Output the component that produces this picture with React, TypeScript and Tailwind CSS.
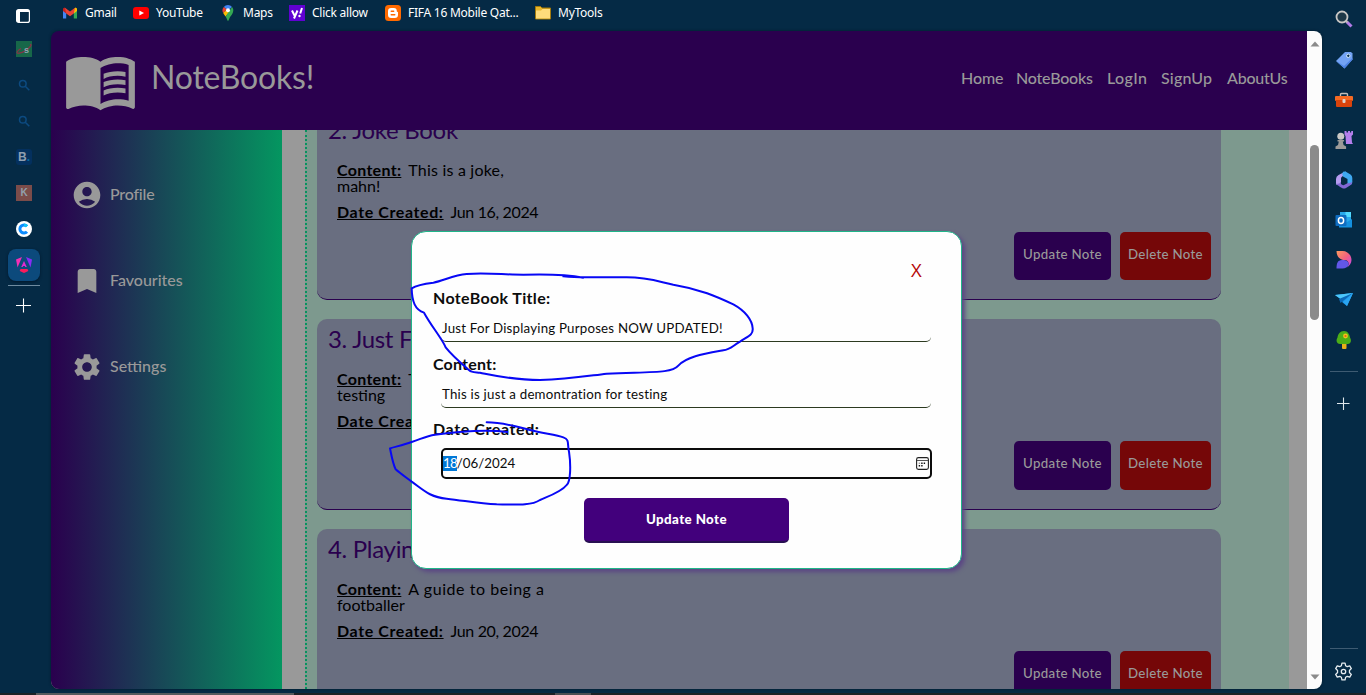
import React from "react";
import { MdAccountCircle, MdBookmark, MdMenuBook, MdSettings } from "react-icons/md";

type Note = { title: string; lines: string[]; date: string; spacing: string };

const notes: Note[] = [
  { title: "2. Joke Book", lines: ["This is a joke,", "mahn!"], date: "Jun 16, 2024", spacing: "tracking-[0.2px]" },
  { title: "3. Just For Displaying Purposes", lines: ["This is just a", "testing"], date: "Jun 18, 2024", spacing: "tracking-[0.2px]" },
  { title: "4. Playing Football", lines: ["A guide to being a", "footballer"], date: "Jun 20, 2024", spacing: "tracking-[0.55px]" },
];

function Bookmark({ icon, label, box }: { icon: React.ReactNode; label: string; box: string }) {
  return (
    <div className={`flex h-[26px] shrink-0 items-center ${box}`}>
      <span className="mr-[7px] flex h-4 w-4 shrink-0">{icon}</span>
      <span className="whitespace-nowrap">{label}</span>
    </div>
  );
}

function BookmarksBar() {
  return (
    <div className="flex h-[31px] shrink-0 items-start pl-[11px] font-['Noto_Sans','Open_Sans',sans-serif] text-[12px] tracking-[-0.25px] text-white">
      <Bookmark
        box="w-[71px]"
        label="Gmail"
        icon={
          <svg viewBox="0 0 16 16" className="h-4 w-4">
            <path d="M1 4v9.500h3.200V6z" fill="#4285f4" />
            <path d="M11.800 6v7.500H15V4z" fill="#34a853" />
            <path d="M1 3.500 2.500 2.500 4.200 4v4.500L1 6z" fill="#c5221f" />
            <path d="M11.800 4l1.700-1.500 1.500 1V6l-3.200 2.500z" fill="#fbbc04" />
            <path d="M3 2.800 8 6.500l5-3.700-1.200 5.700L8 11.300 4.200 8.500z" fill="#ea4335" />
          </svg>
        }
      />
      <Bookmark
        box="w-[87px]"
        label="YouTube"
        icon={
          <svg viewBox="0 0 16 16" className="h-4 w-4">
            <rect y="2" width="16" height="12" rx="3" fill="#f00" />
            <path d="M6.300 5.500v5L11 8z" fill="#fff" />
          </svg>
        }
      />
      <Bookmark
        box="w-[69px]"
        label="Maps"
        icon={
          <svg viewBox="0 0 16 16" className="h-4 w-4">
            <path d="M8 0a5.300 5.300 0 0 0-4.200 2L8 5.500 12 2A5.300 5.300 0 0 0 8 0z" fill="#4285f4" />
            <path d="M3.800 2a5.200 5.200 0 0 0-.6 6L7 4.500z" fill="#ea4335" />
            <path d="M3.200 8c.6 1.300 1.500 2.300 2.400 3.600L10 6 7 4.500z" fill="#fbbc04" />
            <path d="M12 2 5.600 11.600C7 13.500 7.300 16 8 16s1-2.500 2.400-4.400S13.300 8 13.300 5.300c0-1.300-.5-2.500-1.300-3.300z" fill="#34a853" />
            <circle cx="8" cy="5.300" r="2" fill="#fff" />
          </svg>
        }
      />
      <Bookmark
        box="w-[96px]"
        label="Click allow"
        icon={
          <svg viewBox="0 0 16 16" className="h-4 w-4">
            <rect width="16" height="16" fill="#6001d2" />
            <path d="M3 5.500l2.500 5M8.500 5.500 5 13.500M13 3l-1.800 5.500" stroke="#fff" strokeWidth="2" fill="none" />
            <circle cx="10.500" cy="11" r="1.200" fill="#fff" />
          </svg>
        }
      />
      <Bookmark
        box="w-[150px]"
        label="FIFA 16 Mobile Qat..."
        icon={
          <svg viewBox="0 0 16 16" className="h-4 w-4">
            <rect width="16" height="16" rx="3.500" fill="#ff6a00" />
            <path d="M6.200 3h2.600a3 3 0 0 1 3 3v.6l1.200.6v2.600A3.200 3.200 0 0 1 9.800 13H6.200A3.200 3.200 0 0 1 3 9.800V6.200A3.200 3.200 0 0 1 6.200 3z" fill="#fff" />
            <path d="M6.200 6.300h2.500M6.200 9.700h3.600" stroke="#ff6a00" strokeWidth="1.400" strokeLinecap="round" />
          </svg>
        }
      />
      <Bookmark
        box="w-[80px]"
        label="MyTools"
        icon={
          <svg viewBox="0 0 16 16" className="h-4 w-4">
            <path d="M.5 1.500h5l1.500 1.500h8.500v11H.5z" fill="#e8b62c" stroke="#a37a0c" />
            <path d="M1 5.500h5L7.500 4H15v9.500H1z" fill="#ffdc7c" />
          </svg>
        }
      />
    </div>
  );
}

function SearchGlyph() {
  return (
    <svg viewBox="0 0 16 16" className="h-4 w-4" fill="none" stroke="#0c4a80" strokeWidth="1.500">
      <circle cx="6.800" cy="6.800" r="3.300" />
      <path d="M9.300 9.300l4 4" />
    </svg>
  );
}

function Cell({ children }: { children: React.ReactNode }) {
  return <div className="flex h-9 w-8 shrink-0 items-center justify-center">{children}</div>;
}

function TabRail() {
  return (
    <div className="flex w-[51px] shrink-0 flex-col items-start pl-2">
      <div className="flex h-[31px] w-8 items-center justify-center">
        <svg viewBox="0 0 14 14" className="mr-[2px] h-[14px] w-[14px]" fill="none" stroke="#fff">
          <rect x=".6" y=".6" width="12.800" height="12.800" rx="2" strokeWidth="1.200" />
          <path d="M1 2h12" strokeWidth="2" />
          <path d="M2.500 2v11" strokeWidth="3" />
        </svg>
      </div>
      <Cell>
        <div className="flex h-4 w-4 items-center justify-center bg-[#176749]">
          <svg viewBox="0 0 16 16" className="h-4 w-4">
            <path d="M5 7.500C1 10 0 12 2 12.300c2 0 7-2 10-4.500s4-4.500 2-4.500" fill="none" stroke="#843447" strokeWidth="1.300" />
            <text x="8" y="11.500" fontSize="9" fontWeight="700" fill="#8ba7b3" fontFamily="Liberation Sans, sans-serif">s</text>
          </svg>
        </div>
      </Cell>
      <Cell><SearchGlyph /></Cell>
      <Cell><SearchGlyph /></Cell>
      <Cell>
        <div className="flex h-4 w-4 items-center justify-center rounded-[3px] bg-[#04305e] font-['Liberation_Sans',sans-serif] text-[12px] font-bold leading-none text-[#8f9fb0]">
          B<span className="text-[#086b9e]">.</span>
        </div>
      </Cell>
      <Cell>
        <div className="flex h-4 w-4 items-center justify-center bg-[#7b4c4a] font-['Liberation_Sans',sans-serif] text-[10px] font-bold leading-none text-[#91a0ad]">
          K
        </div>
      </Cell>
      <Cell>
        <svg viewBox="0 0 16 16" className="h-4 w-4">
          <circle cx="8" cy="8" r="8" fill="#fff" />
          <path d="M11 5.200A4.100 4.100 0 1 0 11 10.800" fill="none" stroke="#0b8bff" strokeWidth="3" />
          <path d="M8 3.900a4.100 4.100 0 0 1 3 1.300" fill="none" stroke="#12c4f5" strokeWidth="3" />
        </svg>
      </Cell>
      <div className="flex h-9 items-center">
        <div className="flex h-8 w-8 items-center justify-center rounded-[8px] bg-[#0c4a7c] shadow-[0_1px_3px_#02182c]">
          <svg viewBox="0 0 16 16" className="h-4 w-4">
            <path d="M0 2.500 6 0 1.500 10.500z" fill="#f52fb5" />
            <path d="M16 2.500 10 0l4.500 10.500z" fill="#8b2cf5" />
            <path d="M8 4l2.800 6H9.300L8.800 9H7.200l-.5 1H5.200z" fill="#e02bd0" />
            <path d="M4.500 12h7l.8 2L8 16l-4.300-2z" fill="#fa1b5c" />
          </svg>
        </div>
      </div>
      <div className="mt-[2px] h-px w-8 bg-[#6f8ba0]" />
      <svg viewBox="0 0 16 16" className="ml-[7px] mt-3 h-4 w-4" stroke="#fff" strokeWidth="1.100">
        <path d="M8.500 .5v14M1 7.500h15" />
      </svg>
    </div>
  );
}

function ToolCell({ children }: { children: React.ReactNode }) {
  return <div className="flex h-10 w-full shrink-0 items-center justify-center">{children}</div>;
}

function ToolRail() {
  return (
    <div className="-mt-[0.5px] flex w-[44px] shrink-0 flex-col items-center">
      <ToolCell>
        <svg viewBox="0 0 18 18" className="mb-[2px] h-[18px] w-[18px]" fill="none">
          <path d="M11.500 11.500l5 5" stroke="#b27be8" strokeWidth="3" />
          <path d="M10.500 10.500l2 2" stroke="#b9b7b5" strokeWidth="2" />
          <circle cx="7" cy="7" r="5.500" stroke="#c9c7c5" strokeWidth="1.800" fill="#1e3848" />
        </svg>
      </ToolCell>
      <ToolCell>
        <svg viewBox="0 0 18 18" className="h-[18px] w-[18px]">
          <path d="M10 1h6l1.500 1.500v6L9.500 17.500 1 10z" fill="#73a3f4" />
          <path d="M1 10l8.500 7.500 8-9V7L9 15z" fill="#4c82e4" />
          <circle cx="13.300" cy="4.800" r="1.700" fill="#0b3350" stroke="#d8ecff" />
        </svg>
      </ToolCell>
      <ToolCell>
        <svg viewBox="0 0 18 18" className="h-[18px] w-[18px]">
          <path d="M5.500 5V3.500q0-1 1-1h5q1 0 1 1V5" fill="none" stroke="#c2beb9" strokeWidth="1.400" />
          <rect y="5" width="18" height="5" rx="1" fill="#f56a23" />
          <path d="M1 9h16v6q0 1-1 1H2q-1 0-1-1z" fill="#d9430c" />
          <rect x="7.500" y="8" width="3" height="4" rx="1" fill="#dcd5cf" />
        </svg>
      </ToolCell>
      <ToolCell>
        <svg viewBox="0 0 18 18" className="h-[18px] w-[18px]">
          <path d="M9.500 0h2v1.500H13V0h2v1.500h1.200V0H18v3.500L16.500 5l.5 6.500 1 1.500h-7L10.500 5 9.500 3.500z" fill="#b57fec" />
          <circle cx="5.800" cy="5.200" r="3.500" fill="#c9c8c5" />
          <path d="M2.500 9h6.600v1.500H7.800l.8 3.500 2.500 1.500V18H.5v-2.500L3 14l.8-3.500H2.500z" fill="#9c9a98" />
        </svg>
      </ToolCell>
      <ToolCell>
        <svg viewBox="0 0 18 18" className="h-[18px] w-[18px]">
          <path d="M10.500.5 3.500 4Q1 5.500 1 8v4.500Q1 14 2.500 14c2 0 3.500-1 3.500-3V7.500q0-1.500 1.500-2.300L11 3.500z" fill="#b59cf0" />
          <path d="M8 .8 10.500.5 15.500 3.500Q17.300 4.800 17.300 7v4c0 2-1 3-2.800 3L12.500 13V8L8 5.500Q6.500 3 8 .8z" fill="#3fa8f0" />
          <path d="M1.500 12.500C2 14 3 14.500 7 17q2 1 4 0l4-2.500q2.300-1.500 2.300-4-2 2.500-4.300 1.500L9 14q-1.500.5-3-1V11q-1.500 2.500-4.500 1.500z" fill="#8267d5" />
        </svg>
      </ToolCell>
      <ToolCell>
        <svg viewBox="0 0 18 18" className="h-[18px] w-[18px]">
          <rect x="5" y="1" width="11" height="11" fill="#28a8ea" />
          <rect x="10.500" y="1" width="5.500" height="5" fill="#50d9ff" />
          <path d="M4 8l6.500 4L17 8v8.500H4z" fill="#1490df" />
          <rect x=".5" y="4" width="11" height="11" rx="1" fill="#0f6cc0" />
          <ellipse cx="6" cy="9.500" rx="2.600" ry="3" fill="none" stroke="#fff" strokeWidth="1.500" />
        </svg>
      </ToolCell>
      <ToolCell>
        <svg viewBox="0 0 18 18" className="h-[18px] w-[18px]">
          <defs>
            <linearGradient id="petal" x1="0" y1="0" x2="1" y2="1">
              <stop offset="0" stopColor="#fb9a5e" />
              <stop offset=".5" stopColor="#f2617f" />
              <stop offset="1" stopColor="#c443f0" />
            </linearGradient>
          </defs>
          <path d="M1.500 0h6c5 0 9 4 9 9 0 3-2 6-4.500 7.500 3-3.500 1.500-7.500-2.500-7.500-5 0-8-4-8-9z" fill="url(#petal)" />
          <path d="M1.500 17.500c0-5 1-8.500 5.500-8.500 5 0 7 1.500 6.500 5-1 2-3 3.500-6 3.500z" fill="#6257e8" />
        </svg>
      </ToolCell>
      <ToolCell>
        <svg viewBox="0 0 18 18" className="mb-[1px] h-[18px] w-[18px]">
          <path d="M0 5l18-2-6 13-4.500-3.500L7 10z" fill="#1d9bec" />
          <path d="M0 5l18-2L7 10z" fill="#4cc7fb" />
          <path d="M18 3 5.500 13 4 9z" fill="#0c69b8" />
          <path d="M18 3l-9.500 9L12 16z" fill="#2ba5f2" />
        </svg>
      </ToolCell>
      <ToolCell>
        <svg viewBox="0 0 18 18" className="h-[18px] w-[18px]">
          <rect x="7" y="12" width="4.500" height="6" rx="1" fill="#e8ae18" />
          <path d="M9 0c4 0 5.500 3.500 6 6.500 2 3 .5 6.500-2 6.500H5c-3 0-4.500-3.500-2.500-6.500C3 3 5 0 9 0z" fill="#4cae17" />
          <circle cx="10.500" cy="5" r="2.400" fill="#f0c419" />
          <circle cx="10.500" cy="5" r="1.100" fill="#e7601a" />
        </svg>
      </ToolCell>
      <div className="mt-[11px] h-px w-7 bg-[#3e5b72]" />
      <svg viewBox="0 0 14 14" className="mr-[2px] mt-[25px] h-[14px] w-[14px]" stroke="#dfe7ec" strokeWidth="1.100">
        <path d="M7.500 .5v12.500M1 6.500h12.500" />
      </svg>
      <div className="mt-[237px] h-px w-7 bg-[#3e5b72]" />
      <svg viewBox="0 0 24 24" className="mr-[1px] mt-[13px] h-[19px] w-[19px]" fill="none" stroke="#e7edf1" strokeWidth="1.600" strokeLinejoin="round">
        <path d="M9.300 4.800 10 1.500h4l.7 3.300 2 1.100 3.200-1 2 3.400-2.400 2.400v2.600l2.400 2.400-2 3.400-3.200-1-2 1.100-.7 3.300h-4l-.7-3.300-2-1.100-3.200 1-2-3.400 2.400-2.400v-2.600L2.100 8.300l2-3.400 3.200 1z" />
        <circle cx="12" cy="12" r="2.800" />
      </svg>
    </div>
  );
}

function SiteHeader() {
  return (
    <div className="flex h-[99px] shrink-0 bg-[#2a004e] text-[#999]">
      <MdMenuBook className="ml-3 mt-[12px] h-[75px] w-[75px] shrink-0" />
      <div className="ml-[13px] mt-[24px] w-[300px] whitespace-nowrap text-[32px] leading-[44px] tracking-[-0.2px]">NoteBooks!</div>
      <div className="ml-auto flex pt-[37px] text-[16px] font-medium leading-[20px]">
        <span className="w-[55px] tracking-[-0.1px]">Home</span>
        <span className="w-[91px] tracking-[-0.2px]">NoteBooks</span>
        <span className="w-[54px] tracking-[0.4px]">LogIn</span>
        <span className="w-[66px] tracking-[0.2px]">SignUp</span>
        <span className="w-[80px] tracking-[-0.2px]">AboutUs</span>
      </div>
    </div>
  );
}

function SideMenu() {
  return (
    <div className="flex w-[231px] shrink-0 flex-col bg-linear-to-r/srgb from-[#2a004e] to-[#049660] pl-5 pt-[49px] text-[16px] font-medium text-[#999]">
      <div className="flex h-[86px] items-start leading-[30px]">
        <MdAccountCircle className="h-8 w-8" />
        <span className="ml-[7px] tracking-[-0.2px]">Profile</span>
      </div>
      <div className="flex h-[86px] items-start leading-[30px]">
        <MdBookmark className="h-8 w-8" />
        <span className="ml-[7px]">Favourites</span>
      </div>
      <div className="flex h-[86px] items-start leading-[30px]">
        <MdSettings className="h-8 w-8" />
        <span className="ml-[7px]">Settings</span>
      </div>
    </div>
  );
}

function NoteCard({ note }: { note: Note }) {
  return (
    <div className="mb-[19px] flex h-[190.6px] w-[904px] shrink-0 flex-col rounded-[10px] border-b border-[#2a004e] bg-[#696e80] pt-[8px]">
      <h2 className="ml-[11px] text-[24px] leading-[24px] tracking-[-0.3px] text-[#2a004e]">{note.title}</h2>
      <div className="ml-5 mt-[20px] whitespace-nowrap text-[16px] leading-[16px] text-black">
        <p>
          <b className="mr-[7px] tracking-[0.3px] underline">Content:</b>
          <span className={note.spacing}>{note.lines[0]}</span>
        </p>
        <p>{note.lines[1]}</p>
        <p className="mt-[10px]">
          <b className="mr-[7px] tracking-[0.6px] underline">Date Created:</b>
          <span className="tracking-[-0.35px]">{note.date}</span>
        </p>
      </div>
      <div className="mr-[10px] mt-[12px] flex justify-end gap-[9px] text-[13.3px] font-medium tracking-[0.3px] text-[#999]">
        <button className="h-[48.6px] w-[97px] rounded-[5px] bg-[#2a004e] pb-[2px]">Update Note</button>
        <button className="h-[48.6px] w-[91px] rounded-[5px] bg-[#750708] pb-[2px]">Delete Note</button>
      </div>
    </div>
  );
}

function PageScrollbar() {
  return (
    <div className="flex w-[15px] shrink-0 flex-col items-center bg-[#fcfcfc]">
      <svg viewBox="0 0 10 6" className="mt-[9.5px] h-[6px] w-[10px]" fill="#8b8b8b">
        <path d="M5 .5 9.500 5.500H.5z" />
      </svg>
      <div className="mt-[98.5px] h-[175px] w-[9px] rounded-full bg-[#8b8b8b]" />
      <svg viewBox="0 0 10 6" className="mb-[9px] mt-auto h-[6px] w-[10px]" fill="#8b8b8b">
        <path d="M.5 .5h9L5 5.500z" />
      </svg>
    </div>
  );
}

function CalendarIcon() {
  return (
    <svg viewBox="0 0 13 13" className="h-[13px] w-[13px]">
      <rect x=".6" y=".6" width="11.800" height="11.800" rx="1.800" fill="none" stroke="#222" strokeWidth="1.100" />
      <path d="M1 3.500h11" stroke="#555" />
      <path d="M5.200 6.300h1.400M7.700 6.300h1.400M2.700 8.800h1.400M5.200 8.800h1.400" stroke="#111" strokeWidth="1.400" />
      <path d="M2.700 6.300h1.400" stroke="#999" strokeWidth="1.400" />
    </svg>
  );
}

function UpdateDialog() {
  return (
    <div className="absolute left-[411px] top-[231px] flex h-[338px] w-[551px] flex-col rounded-[15px] border border-[#1fb589] bg-[#fefefe] px-[21px] text-[#0c0c0c] shadow-[3px_3px_4px_#5b4784]">
      <div className="mr-[16px] mt-[25px] self-end text-[20px] leading-[26px] text-[#b50606]">
        <span className="block w-[13px] font-['Open_Sans',sans-serif] text-[18.5px] font-medium">X</span>
      </div>
      <div className="mt-[5px] text-[16px] font-bold leading-[20px] tracking-[0.35px]">NoteBook Title:</div>
      <div className="ml-2 mt-[9px] h-[25px] w-[490px] rounded-[5px] border-b border-[#2c3a20] pl-[1px] text-[13.3px] leading-[22px] tracking-[0.2px]">
        Just For Displaying Purposes NOW UPDATED!
      </div>
      <div className="mt-[12px] text-[16px] font-bold leading-[20px] tracking-[0.2px]">Content:</div>
      <div className="ml-2 mt-[9px] h-[25px] w-[490px] rounded-[5px] border-b border-[#2c3a20] pl-[1px] text-[13.3px] leading-[22px] tracking-[0.22px]">
        This is just a demontration for testing
      </div>
      <div className="mt-[11px] text-[16px] font-bold leading-[20px] tracking-[0.6px]">Date Created:</div>
      <div className="ml-2 mt-[9px] flex h-[31px] w-[491px] items-center rounded-[5px] border-2 border-[#0c0c0c] pr-[1px] text-[13.3px] leading-[15px]">
        <span className="bg-[#0078d7] tracking-[-0.8px] text-white">18</span>
        <span>/06/2024</span>
        <span className="ml-auto"><CalendarIcon /></span>
      </div>
      <button className="ml-[151px] mt-[19px] h-[45px] w-[205px] rounded-[5px] border-b-2 border-[#281052] bg-[#42007c] text-[13.3px] font-black tracking-[0.4px] text-white">
        Update Note
      </button>
    </div>
  );
}

function PenMarks() {
  return (
    <svg viewBox="0 0 1200 900" className="pointer-events-none absolute left-[380px] top-[225px] h-[300px] w-[400px]" fill="none" stroke="#0808f5" strokeWidth="6" strokeLinecap="round" strokeLinejoin="round">
      <path d="M550 154Q580 157 620 157H740C800 157 830 168 880 179C960 192 1010 215 1060 238C1095 257 1117 285 1118 310C1120 330 1105 333 1080 350C1055 365 1050 374 1030 376C970 387 920 395 895 422C875 445 820 440 680 446C600 456 560 463 480 465C400 465 350 453 300 443C280 441 275 443 262 431C238 410 215 390 197 367C187 342 155 305 132 263C105 254 96 230 95 190C110 180 125 177 160 173C190 168 220 150 260 147C320 143 370 149 430 149C500 147 560 148 610 158" />
      <path d="M320 592C370 592 410 605 450 615S530 630 550 637S561 657 567 680C573 720 572 770 560 780C545 800 510 812 480 825C455 842 410 839 350 838C300 836 260 828 200 821C150 817 130 795 95 770C75 755 60 745 47 733C38 715 34 690 30 670C50 664 70 660 95 651C130 639 140 633 165 629C210 623 300 611 382 621" />
    </svg>
  );
}

export default function App() {
  return (
    <div className="relative flex h-[695px] w-[1366px] flex-col overflow-hidden bg-[#052a45] font-['Lato','Liberation_Sans',sans-serif]">
      <div className="flex h-[693px] shrink-0">
        <TabRail />
        <div className="flex w-[1271px] flex-col">
          <BookmarksBar />
          <div className="flex h-[658px] overflow-hidden rounded-[8px] shadow-[0_0_3px_#021a2c]">
            <div className="flex w-[1256px] flex-col">
              <SiteHeader />
              <div className="flex min-h-0 flex-1 bg-[#999]">
                <SideMenu />
                <div className="ml-[23px] w-[984px] overflow-hidden border-l-2 border-dotted border-[#07925f] bg-[#7d998e] pl-[10px]">
                  <div className="-mt-[20.5px] flex flex-col">
                    {notes.map((n) => (
                      <NoteCard key={n.title} note={n} />
                    ))}
                  </div>
                </div>
              </div>
            </div>
            <PageScrollbar />
          </div>
        </div>
        <ToolRail />
      </div>
      <div className="flex h-[2px] bg-[#1c2226]">
        <div className="ml-[36px] h-[2px] w-[258px] bg-[#555a5d]" />
        <div className="ml-[261px] h-[2px] w-[36px] bg-[#4a4f52]" />
      </div>
      <UpdateDialog />
      <PenMarks />
    </div>
  );
}
